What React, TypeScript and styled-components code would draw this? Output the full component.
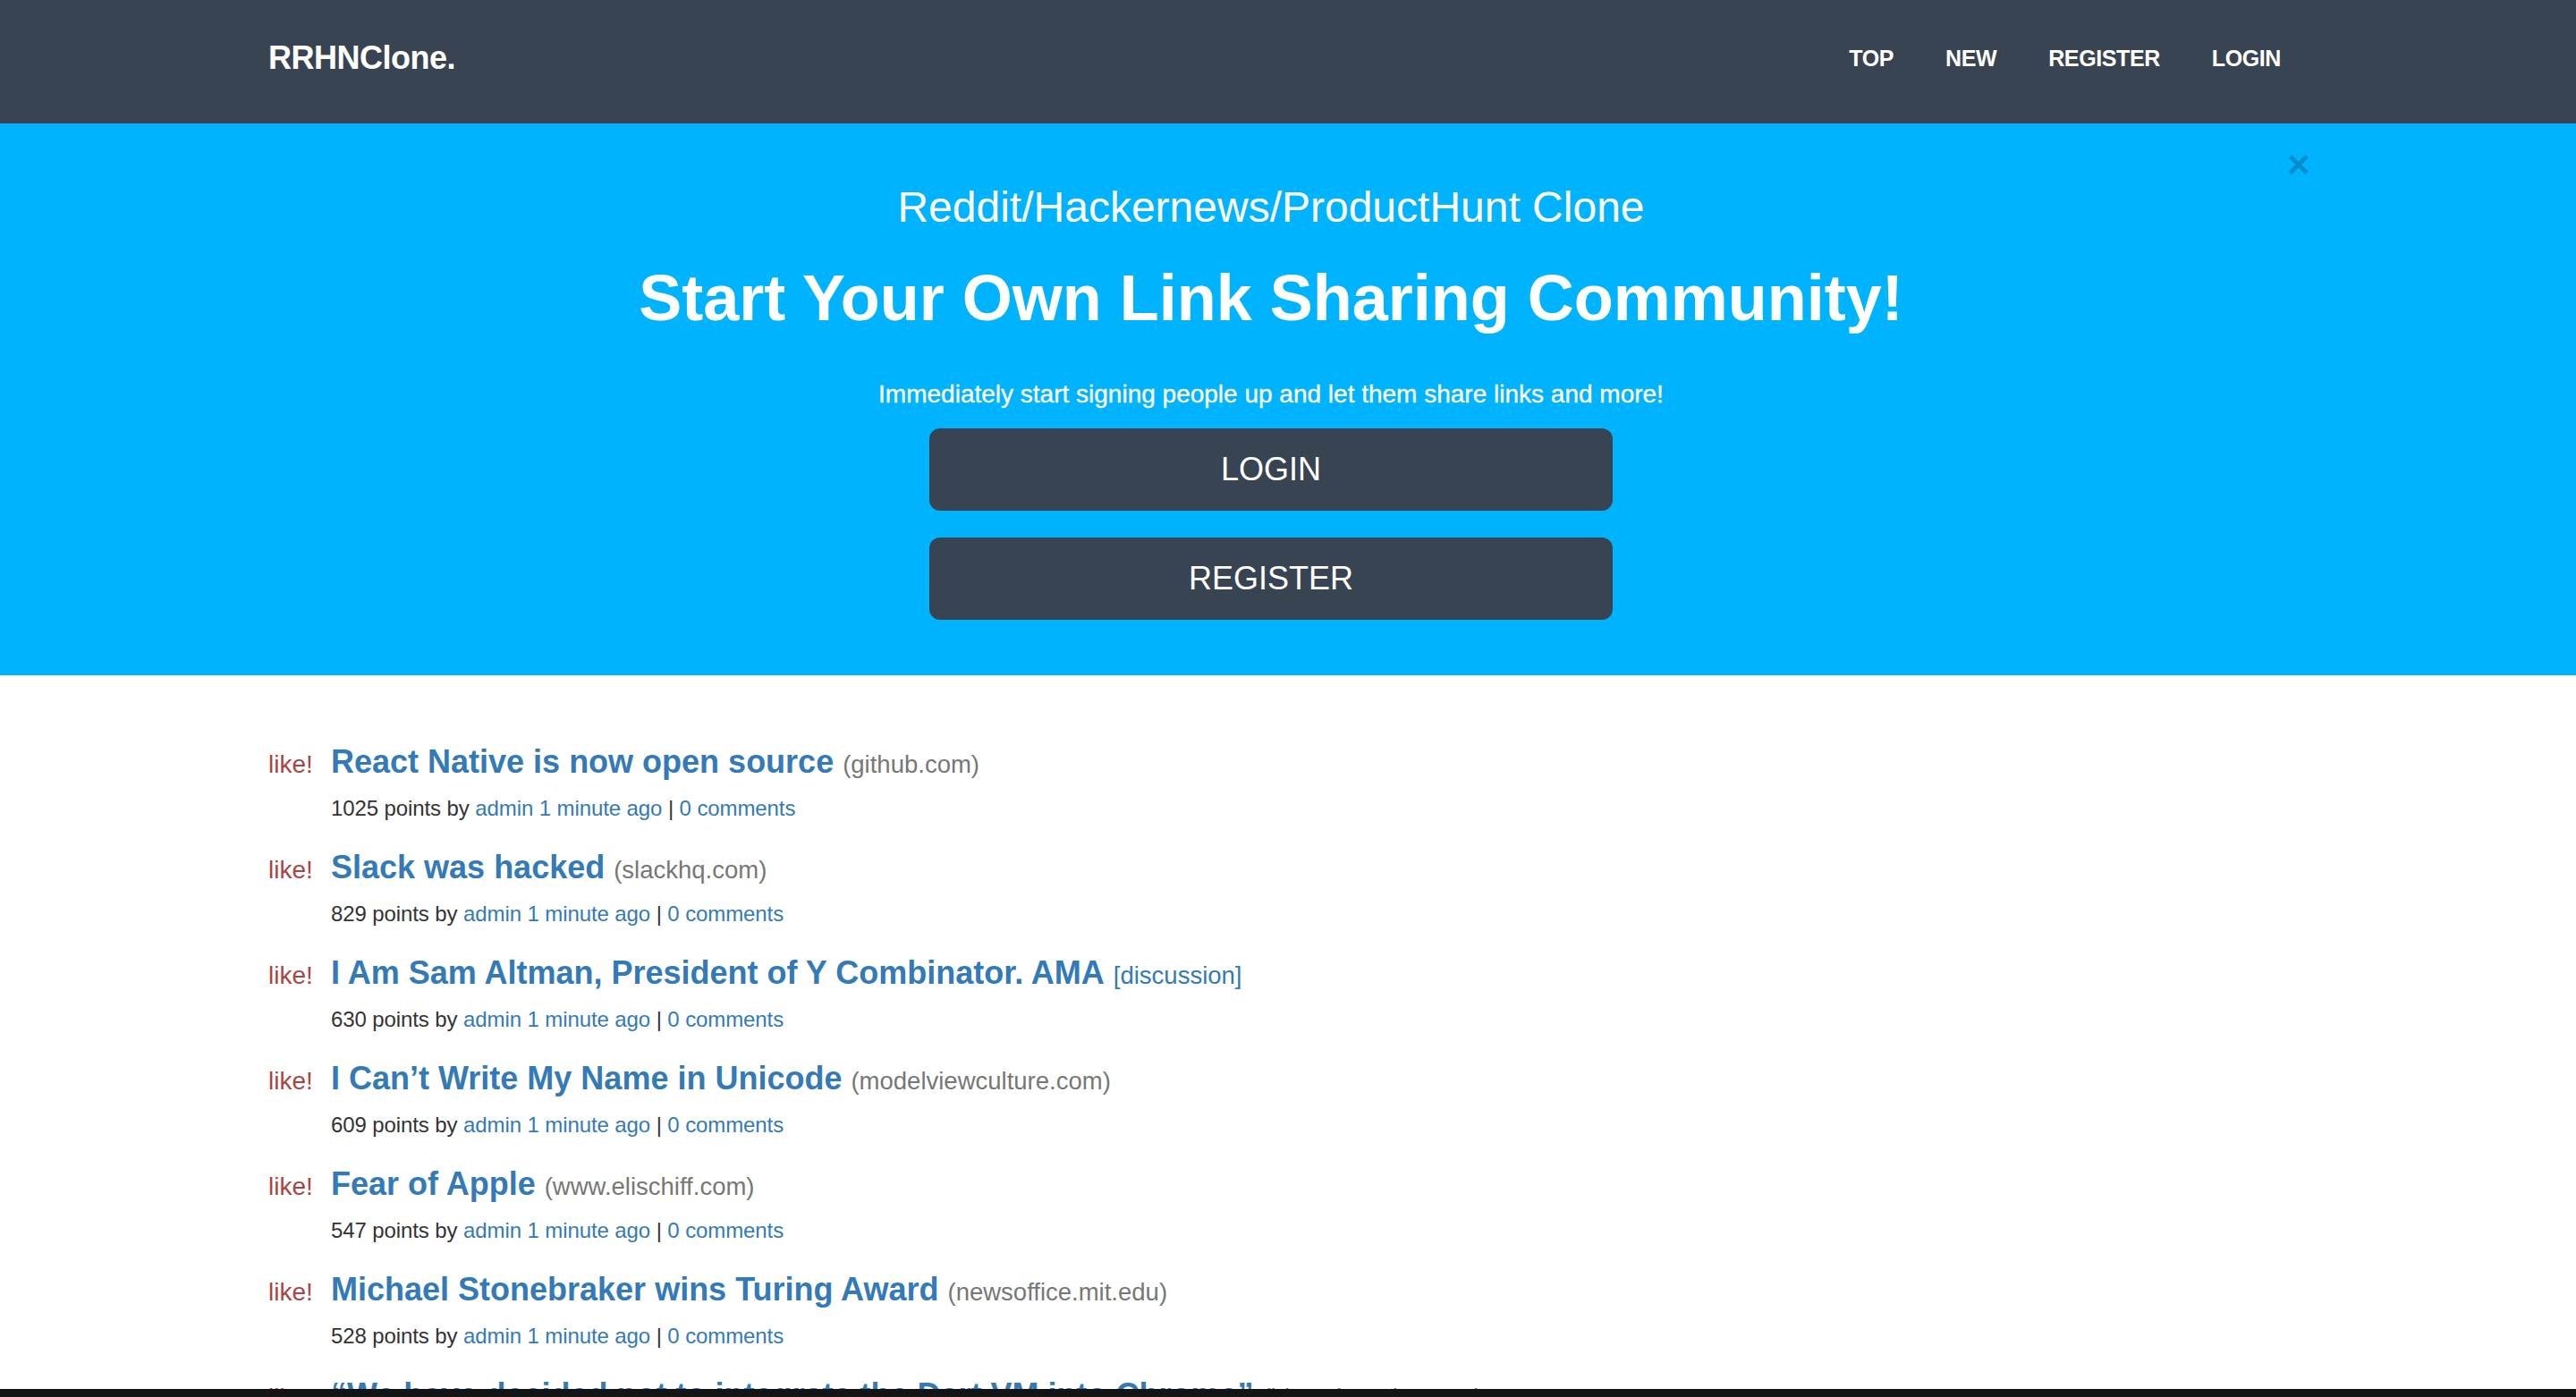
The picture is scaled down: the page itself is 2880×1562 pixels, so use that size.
import styled, { createGlobalStyle } from "styled-components"

const GlobalStyle = createGlobalStyle`
  html, body {
    margin: 0;
    padding: 0;
    background: #fff;
    font-family: "Liberation Sans", Arial, Helvetica, sans-serif;
    color: #333;
  }
  a {
    text-decoration: none;
  }
`

const posts = [
  {title: "React Native is now open source", domain: "(github.com)", points: 1025},
  {title: "Slack was hacked", domain: "(slackhq.com)", points: 829},
  {title: "I Am Sam Altman, President of Y Combinator. AMA", discussion: true, points: 630},
  {title: "I Can’t Write My Name in Unicode", domain: "(modelviewculture.com)", points: 609},
  {title: "Fear of Apple", domain: "(www.elischiff.com)", points: 547},
  {title: "Michael Stonebraker wins Turing Award", domain: "(newsoffice.mit.edu)", points: 528},
  {title: "“We have decided not to integrate the Dart VM into Chrome”", domain: "(blog.chromium.org)", points: 511},
]

const Post = ({title, domain, discussion, points}: {title: string, domain?: string, discussion?: boolean, points: number}) => {
  return (
    <Item>
      <TitleRow>
        <Like>like!</Like>
        <TitleLink href="#">{title}</TitleLink>
        {discussion
          ? <Discussion href="#">[discussion]</Discussion>
          : <Domain>{domain}</Domain>}
      </TitleRow>
      <Meta>
        {points} points by <MetaLink href="#">admin</MetaLink> <MetaLink href="#">1 minute ago</MetaLink> | <MetaLink href="#">0 comments</MetaLink>
      </Meta>
    </Item>
  )
}

export default function App() {
  return (
    <Page>
      <GlobalStyle/>
      <Navbar>
        <NavContainer>
          <Brand href="#">RRHNClone.</Brand>
          <NavLinks>
            <NavLink href="#">TOP</NavLink>
            <NavLink href="#">NEW</NavLink>
            <NavLink href="#">REGISTER</NavLink>
            <NavLink href="#">LOGIN</NavLink>
          </NavLinks>
        </NavContainer>
      </Navbar>
      <Hero>
        <Close>×</Close>
        <HeroContainer>
          <Subtitle>Reddit/Hackernews/ProductHunt Clone</Subtitle>
          <Headline>Start Your Own Link Sharing Community!</Headline>
          <Tagline>Immediately start signing people up and let them share links and more!</Tagline>
          <HeroButton>LOGIN</HeroButton>
          <HeroButton>REGISTER</HeroButton>
        </HeroContainer>
      </Hero>
      <List>
        {posts.map((p) => <Post key={p.title} {...p}/>)}
      </List>
      <BottomEdge/>
    </Page>
  )
}

const Page = styled.div`
  position: relative;
  height: 100vh;
  overflow: hidden;
`

const Container = styled.div`
  width: 2242px;
  margin-left: 300px;
`

const Navbar = styled.nav`
  background: #394452;
  height: 138px;
`

const NavContainer = styled(Container)`
  height: 130px;
  display: flex;
  align-items: center;
  justify-content: space-between;
`

const Brand = styled.a`
  color: #fff;
  font-weight: bold;
  font-size: 36px;
  letter-spacing: -0.5px;
`

const NavLinks = styled.div`
  display: flex;
  gap: 58px;
  margin-right: -8px;
`

const NavLink = styled.a`
  color: #fff;
  font-weight: bold;
  font-size: 25px;
  letter-spacing: -0.4px;
`

const Hero = styled.section`
  position: relative;
  background: #00b3fe;
  color: #fff;
  padding: 67px 0 62px;
`

const Close = styled.span`
  position: absolute;
  left: 2557px;
  top: 24px;
  font-size: 44px;
  font-weight: bold;
  line-height: 1;
  color: #000;
  opacity: 0.2;
`

const HeroContainer = styled(Container)`
  display: flex;
  flex-direction: column;
  align-items: center;
  text-align: center;
`

const Subtitle = styled.h3`
  margin: 0;
  font-size: 48px;
  font-weight: normal;
  line-height: 53px;
`

const Headline = styled.h1`
  margin: 36px 0 0;
  font-size: 72px;
  font-weight: bold;
  line-height: 79px;
`

const Tagline = styled.p`
  margin: 48px 0 0;
  font-size: 28px;
  line-height: 40px;
  -webkit-text-stroke: 0.3px #fff;
`

const HeroButton = styled.button`
  margin-top: 18px;
  & + & {
    margin-top: 30px;
  }
  width: 764px;
  height: 92px;
  border: none;
  border-radius: 12px;
  background: #394452;
  color: #fff;
  font-family: inherit;
  font-size: 36px;
`

const List = styled(Container)`
  padding-top: 75px;
`

const Item = styled.div`
  margin-bottom: 28px;
`

const TitleRow = styled.div`
  display: flex;
  align-items: baseline;
  height: 44px;
  line-height: 44px;
  white-space: nowrap;
`

const Like = styled.a`
  width: 70px;
  flex: none;
  color: #a94442;
  font-size: 28px;
`

const TitleLink = styled.a`
  color: #337ab7;
  font-weight: bold;
  font-size: 36px;
`

const Domain = styled.span`
  margin-left: 10px;
  color: #777;
  font-size: 27.5px;
`

const Discussion = styled.a`
  margin-left: 10px;
  color: #337ab7;
  font-size: 27.5px;
`

const Meta = styled.div`
  margin-top: 14px;
  padding-left: 70px;
  font-size: 24px;
  line-height: 32px;
  color: #333;
  letter-spacing: -0.1px;
`

const MetaLink = styled.a`
  color: #337ab7;
`

const BottomEdge = styled.div`
  position: absolute;
  left: 0;
  right: 0;
  bottom: 0;
  height: 9px;
  background: #141414;
`
